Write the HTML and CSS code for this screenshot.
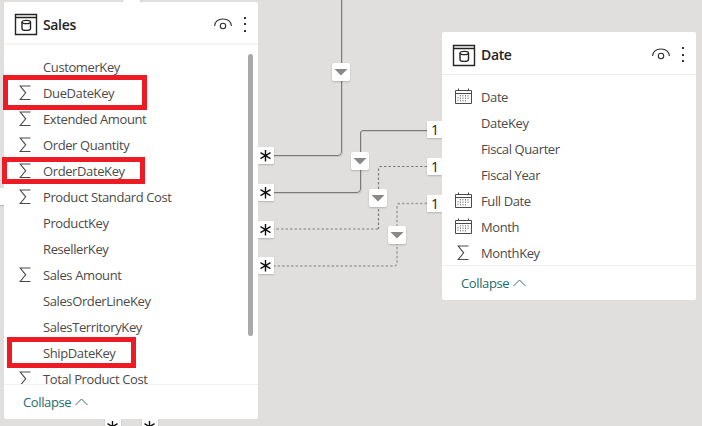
FILE: index.html
```html
<!DOCTYPE html>
<html lang="en">
<head>
<meta charset="utf-8">
<title>Model view</title>
<link rel="stylesheet" href="styles.css">
</head>
<body>
<svg class="defs" width="0" height="0">
  <symbol id="table" viewBox="0 0 24 23"><path d="M1.500 1.500H22.500V21.500H1.500ZM1.500 4.500H22.500" fill="none" stroke="#252423" stroke-width="1.400"/><path d="M8 9V15.500C8 18 16.500 18 16.500 15.500V9" fill="none" stroke="#252423" stroke-width="1.400"/><ellipse cx="12.250" cy="9" rx="4.250" ry="1.700" fill="none" stroke="#252423" stroke-width="1.300"/></symbol>
  <symbol id="eye" viewBox="0 0 18 12"><path d="M.6 8C1 3.500 4.500 1 9 1S17 3.500 17.400 8" fill="none" stroke="#323130" stroke-width="1.1"/><circle cx="9" cy="8" r="2.700" fill="none" stroke="#323130" stroke-width="1.1"/></symbol>
  <symbol id="sigma" viewBox="0 0 12 16"><path d="M11.500 1H1.200L6.700 7.800L1.200 14.500H11.500" fill="none" stroke="#4c4a48" stroke-width="1.1"/></symbol>
  <symbol id="calendar" viewBox="0 0 18 17"><path d="M.5 2.500H16.500V15.500H.5ZM.5 5.500H16.500M3.500 .5V3M13.500 .5V3" fill="none" stroke="#4c4a48"/><path d="M5.500 7V14M8 7V14M10.500 7V14M13 7V12M3 9V14" fill="none" stroke="#8a8886" stroke-dasharray="1.500 1"/></symbol>
  <symbol id="chevron" viewBox="0 0 13 8"><path d="M.5 7L6.500 1L12.500 7" fill="none" stroke="#41696b"/></symbol>
  <symbol id="star" viewBox="0 0 16 17"><path d="M7.500 3V14.500M2.500 5.700L12.500 11.700M12.500 5.700L2.500 11.700" fill="none" stroke="#111" stroke-width="1.400"/></symbol>
  <symbol id="arrow" viewBox="0 0 18 18"><path d="M2.500 6H15.500L9 12.500Z" fill="#8a8886"/></symbol>
</svg>
<main class="canvas">
  <svg class="links" width="702" height="426" fill="none">
    <path class="halo" d="M342.500 0V153Q342.500 156.500 339 156.500H274M427 131.500H361.500V190Q361.500 193.500 358 193.500H274"/>
    <path class="solid" d="M341.500 0V152Q341.500 155.500 338 155.500H274M427 130.500H363Q360.500 130.500 360.500 133V189Q360.500 192.500 357 192.500H274"/>
    <path class="dotted dark" d="M427 166.500H381Q378.500 166.500 378.500 169V229"/>
    <path class="dotted" d="M427 203.500H400Q397 203.500 397 206V263Q397 266 394 266H274M378 229H274"/>
  </svg>

  <span class="tag edge-top"></span>
  <span class="tag edge-left"></span>
  <svg class="tag m1"><use href="#star"/></svg>
  <svg class="tag m2"><use href="#star"/></svg>
  <svg class="tag m3"><use href="#star"/></svg>
  <svg class="tag m4"><use href="#star"/></svg>
  <svg class="tag m5"><use href="#star"/></svg>
  <svg class="tag m6"><use href="#star"/></svg>
  <span class="tag one o1">1</span>
  <span class="tag one o2">1</span>
  <span class="tag one o3">1</span>
  <svg class="tag dir d1"><use href="#arrow"/></svg>
  <svg class="tag dir d2"><use href="#arrow"/></svg>
  <svg class="tag dir d3"><use href="#arrow"/></svg>
  <svg class="tag dir d4"><use href="#arrow"/></svg>

  <section class="card sales">
    <header><svg class="table"><use href="#table"/></svg><h2>Sales</h2><svg class="eye"><use href="#eye"/></svg><span class="more"><i></i><i></i><i></i></span></header>
    <ul>
      <li><span class="icon"></span>CustomerKey</li>
      <li><span class="icon"><svg class="sigma"><use href="#sigma"/></svg></span>DueDateKey</li>
      <li><span class="icon"><svg class="sigma"><use href="#sigma"/></svg></span>Extended Amount</li>
      <li><span class="icon"><svg class="sigma"><use href="#sigma"/></svg></span>Order Quantity</li>
      <li><span class="icon"><svg class="sigma"><use href="#sigma"/></svg></span>OrderDateKey</li>
      <li><span class="icon"><svg class="sigma"><use href="#sigma"/></svg></span>Product Standard Cost</li>
      <li><span class="icon"></span>ProductKey</li>
      <li><span class="icon"></span>ResellerKey</li>
      <li><span class="icon"><svg class="sigma"><use href="#sigma"/></svg></span>Sales Amount</li>
      <li><span class="icon"></span>SalesOrderLineKey</li>
      <li><span class="icon"></span>SalesTerritoryKey</li>
      <li><span class="icon"></span>ShipDateKey</li>
      <li><span class="icon"><svg class="sigma"><use href="#sigma"/></svg></span>Total Product Cost</li>
    </ul>
    <footer>Collapse<svg class="chevron"><use href="#chevron"/></svg></footer>
    <span class="scroll"></span>
  </section>

  <section class="card date">
    <header><svg class="table"><use href="#table"/></svg><h2>Date</h2><svg class="eye"><use href="#eye"/></svg><span class="more"><i></i><i></i><i></i></span></header>
    <ul>
      <li><span class="icon"><svg class="calendar"><use href="#calendar"/></svg></span>Date</li>
      <li><span class="icon"></span>DateKey</li>
      <li><span class="icon"></span>Fiscal Quarter</li>
      <li><span class="icon"></span>Fiscal Year</li>
      <li><span class="icon"><svg class="calendar"><use href="#calendar"/></svg></span>Full Date</li>
      <li><span class="icon"><svg class="calendar"><use href="#calendar"/></svg></span>Month</li>
      <li><span class="icon"><svg class="sigma"><use href="#sigma"/></svg></span>MonthKey</li>
    </ul>
    <footer>Collapse<svg class="chevron"><use href="#chevron"/></svg></footer>
  </section>

  <span class="mark k1"></span>
  <span class="mark k2"></span>
  <span class="mark k3"></span>
</main>
</body>
</html>
```
FILE: styles.css
```css
* { box-sizing: border-box; }
body { margin: 0; font-family: "Open Sans", "Noto Sans", sans-serif; }
svg { display: block; }
.defs { position: absolute; }
.canvas { position: relative; width: 702px; height: 426px; overflow: hidden; background: #e0dfdd; }
.links { position: absolute; left: 0; top: 0; }
.solid { stroke: #7d7b79; }
.halo { stroke: #c8c7c5; }
.dotted { stroke: #a19f9d; stroke-width: 1.5; stroke-dasharray: 2.5 2; }
.dotted.dark { stroke: #7d7b79; stroke-width: 1.2; }

.card { position: absolute; width: 254px; display: flex; flex-direction: column; background: #fff; border-radius: 2px; }
.sales { left: 4px; top: 2px; height: 417px; }
.date { left: 442px; top: 32px; height: 268px; }
.card header { flex: none; height: 43px; padding: 4px 11px 0 10px; display: flex; align-items: center; border-bottom: 1px solid #edebe9; }
.sales header { border-bottom: 2px solid #f5f4f3; }
.card h2 { flex: 1; margin: 0 0 0 5px; font-size: 14px; line-height: 20px; font-weight: 600; letter-spacing: -0.35px; color: #252423; }
.table { width: 24px; height: 23px; }
.eye { width: 18px; height: 12px; margin: -2px 12px 0 0; }
.more { width: 3px; height: 15px; margin-top: -1px; display: flex; flex-direction: column; justify-content: space-between; }
.more i { width: 2px; height: 2px; background: #323130; }
.card ul { flex: 1; min-height: 0; overflow: hidden; list-style: none; margin: 0; padding: 9px 0 0 13px; }
.card li { height: 26px; display: flex; align-items: center; font-size: 13px; letter-spacing: -0.39px; white-space: nowrap; color: #4c4a48; }
.icon { width: 26px; display: flex; }
.sigma { width: 12px; height: 16px; margin-left: 2px; }
.calendar { width: 18px; height: 17px; margin-top: -2px; }
.card footer { flex: none; height: 35px; padding: 0 0 1px 19px; display: flex; align-items: center; gap: 4px; border-top: 1px solid #f0efee; font-size: 13px; letter-spacing: -0.38px; color: #1f6b68; }
.chevron { width: 13px; height: 8px; }
.scroll { position: absolute; left: 244px; top: 52px; width: 5px; height: 282px; border-radius: 3px; background: #a9a9a9; }

.tag { position: absolute; width: 16px; height: 17px; background: #fff; border-radius: 1px; box-shadow: 0 1px 2px rgba(0, 0, 0, .2); }
.m1, .m2, .m3, .m4 { left: 258px; }
.m1 { top: 147px; } .m2 { top: 184px; } .m3 { top: 221px; } .m4 { top: 257px; }
.m5 { left: 105px; top: 418px; } .m6 { left: 142px; top: 418px; }
.one { left: 427px; padding-left: 4px; font-size: 14px; line-height: 17px; font-weight: 500; color: #1b1a19; }
.o1 { top: 121px; } .o2 { top: 158px; } .o3 { top: 195px; }
.dir { width: 18px; height: 18px; border-radius: 2px; }
.d1 { left: 332px; top: 63px; } .d2 { left: 351px; top: 152px; } .d3 { left: 369px; top: 189px; } .d4 { left: 388px; top: 226px; }
.edge-top { left: 123px; top: -15px; width: 17px; }
.edge-left { left: -12px; top: 188px; }

.mark { position: absolute; border: 5px solid #ed1c24; }
.k1 { left: 3px; top: 75px; width: 144px; height: 35px; }
.k2 { left: 2px; top: 157px; width: 143px; height: 27px; }
.k3 { left: 7px; top: 337px; width: 129px; height: 31px; }
```
